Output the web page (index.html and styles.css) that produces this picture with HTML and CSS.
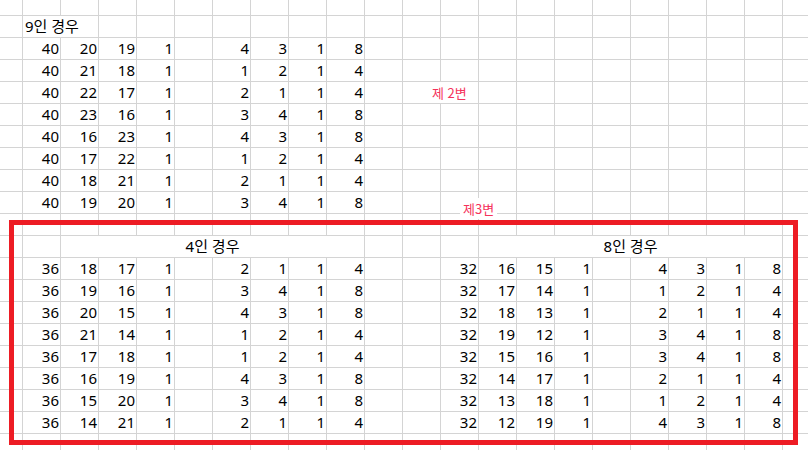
FILE: index.html
```html
<!DOCTYPE html>
<html lang="ko">
<head>
<meta charset="utf-8">
<title>Sheet</title>
<link rel="stylesheet" href="styles.css">
</head>
<body>
<div class="sheet">
  <div class="row row-top"></div>
  <div class="row"><div></div><div class="title">9인 경우</div></div>

  <div class="row"><div></div><div class="num">40</div><div class="num">20</div><div class="num">19</div><div class="num">1</div><div></div><div class="num">4</div><div class="num">3</div><div class="num">1</div><div class="num">8</div></div>
  <div class="row"><div></div><div class="num">40</div><div class="num">21</div><div class="num">18</div><div class="num">1</div><div></div><div class="num">1</div><div class="num">2</div><div class="num">1</div><div class="num">4</div></div>
  <div class="row"><div></div><div class="num">40</div><div class="num">22</div><div class="num">17</div><div class="num">1</div><div></div><div class="num">2</div><div class="num">1</div><div class="num">1</div><div class="num">4</div></div>
  <div class="row"><div></div><div class="num">40</div><div class="num">23</div><div class="num">16</div><div class="num">1</div><div></div><div class="num">3</div><div class="num">4</div><div class="num">1</div><div class="num">8</div></div>
  <div class="row"><div></div><div class="num">40</div><div class="num">16</div><div class="num">23</div><div class="num">1</div><div></div><div class="num">4</div><div class="num">3</div><div class="num">1</div><div class="num">8</div></div>
  <div class="row"><div></div><div class="num">40</div><div class="num">17</div><div class="num">22</div><div class="num">1</div><div></div><div class="num">1</div><div class="num">2</div><div class="num">1</div><div class="num">4</div></div>
  <div class="row"><div></div><div class="num">40</div><div class="num">18</div><div class="num">21</div><div class="num">1</div><div></div><div class="num">2</div><div class="num">1</div><div class="num">1</div><div class="num">4</div></div>
  <div class="row"><div></div><div class="num">40</div><div class="num">19</div><div class="num">20</div><div class="num">1</div><div></div><div class="num">3</div><div class="num">4</div><div class="num">1</div><div class="num">8</div></div>

  <div class="row"></div>

  <div class="row"><div></div><div></div><div class="merged">4인 경우</div><div></div><div></div><div></div><div class="merged">8인 경우</div></div>

  <div class="row"><div></div><div class="num">36</div><div class="num">18</div><div class="num">17</div><div class="num">1</div><div></div><div class="num">2</div><div class="num">1</div><div class="num">1</div><div class="num">4</div><div></div><div></div><div class="num">32</div><div class="num">16</div><div class="num">15</div><div class="num">1</div><div></div><div class="num">4</div><div class="num">3</div><div class="num">1</div><div class="num">8</div></div>
  <div class="row"><div></div><div class="num">36</div><div class="num">19</div><div class="num">16</div><div class="num">1</div><div></div><div class="num">3</div><div class="num">4</div><div class="num">1</div><div class="num">8</div><div></div><div></div><div class="num">32</div><div class="num">17</div><div class="num">14</div><div class="num">1</div><div></div><div class="num">1</div><div class="num">2</div><div class="num">1</div><div class="num">4</div></div>
  <div class="row"><div></div><div class="num">36</div><div class="num">20</div><div class="num">15</div><div class="num">1</div><div></div><div class="num">4</div><div class="num">3</div><div class="num">1</div><div class="num">8</div><div></div><div></div><div class="num">32</div><div class="num">18</div><div class="num">13</div><div class="num">1</div><div></div><div class="num">2</div><div class="num">1</div><div class="num">1</div><div class="num">4</div></div>
  <div class="row"><div></div><div class="num">36</div><div class="num">21</div><div class="num">14</div><div class="num">1</div><div></div><div class="num">1</div><div class="num">2</div><div class="num">1</div><div class="num">4</div><div></div><div></div><div class="num">32</div><div class="num">19</div><div class="num">12</div><div class="num">1</div><div></div><div class="num">3</div><div class="num">4</div><div class="num">1</div><div class="num">8</div></div>
  <div class="row"><div></div><div class="num">36</div><div class="num">17</div><div class="num">18</div><div class="num">1</div><div></div><div class="num">1</div><div class="num">2</div><div class="num">1</div><div class="num">4</div><div></div><div></div><div class="num">32</div><div class="num">15</div><div class="num">16</div><div class="num">1</div><div></div><div class="num">3</div><div class="num">4</div><div class="num">1</div><div class="num">8</div></div>
  <div class="row"><div></div><div class="num">36</div><div class="num">16</div><div class="num">19</div><div class="num">1</div><div></div><div class="num">4</div><div class="num">3</div><div class="num">1</div><div class="num">8</div><div></div><div></div><div class="num">32</div><div class="num">14</div><div class="num">17</div><div class="num">1</div><div></div><div class="num">2</div><div class="num">1</div><div class="num">1</div><div class="num">4</div></div>
  <div class="row"><div></div><div class="num">36</div><div class="num">15</div><div class="num">20</div><div class="num">1</div><div></div><div class="num">3</div><div class="num">4</div><div class="num">1</div><div class="num">8</div><div></div><div></div><div class="num">32</div><div class="num">13</div><div class="num">18</div><div class="num">1</div><div></div><div class="num">1</div><div class="num">2</div><div class="num">1</div><div class="num">4</div></div>
  <div class="row"><div></div><div class="num">36</div><div class="num">14</div><div class="num">21</div><div class="num">1</div><div></div><div class="num">2</div><div class="num">1</div><div class="num">1</div><div class="num">4</div><div></div><div></div><div class="num">32</div><div class="num">12</div><div class="num">19</div><div class="num">1</div><div></div><div class="num">4</div><div class="num">3</div><div class="num">1</div><div class="num">8</div></div>

  <div class="row"></div>

  <div class="note note-2">제 2변</div>
  <div class="note note-3">제3변</div>
  <div class="frame"></div>
</div>
</body>
</html>
```

FILE: styles.css
```css
html, body {
  margin: 0;
  padding: 0;
  background: #fff;
  overflow: hidden;
}

.sheet {
  position: relative;
  width: 808px;
  height: 450px;
  overflow: hidden;
  font-family: "Noto Sans", "Noto Sans CJK KR", sans-serif;
  font-size: 15px;
  color: #000;
  background-color: #fff;
  background-image:
    linear-gradient(to right, transparent 37px, #d4d4d4 37px),
    linear-gradient(to bottom, transparent 21px, #d4d4d4 21px);
  background-size: 38px 100%, 100% 22px;
  background-position: 23px 0, 0 16px;
}

.row {
  display: grid;
  grid-template-columns: 23px repeat(21, 38px);
  height: 22px;
  line-height: 21px;
}

.row-top {
  height: 16px;
}

.num {
  text-align: right;
  padding-right: 2px;
  white-space: nowrap;
}

.title {
  grid-column: span 2;
  margin: 0 1px 1px 0;
  padding-left: 2px;
  background: #fff;
  white-space: nowrap;
}

.merged {
  grid-column: span 8;
  margin: 0 1px 1px 0;
  text-align: center;
  background: #fff;
  white-space: nowrap;
}

.note {
  position: absolute;
  padding: 0 3px;
  font-family: "Noto Sans CJK KR", sans-serif;
  font-size: 13px;
  line-height: 21px;
  color: #f5325b;
  background: #fff;
  white-space: nowrap;
}

.note-2 {
  left: 429px;
  top: 82px;
}

.note-3 {
  left: 460px;
  top: 198px;
}

.frame {
  position: absolute;
  left: 9px;
  top: 220px;
  width: 779px;
  height: 215px;
  border: 5px solid #ed1c24;
}
```
